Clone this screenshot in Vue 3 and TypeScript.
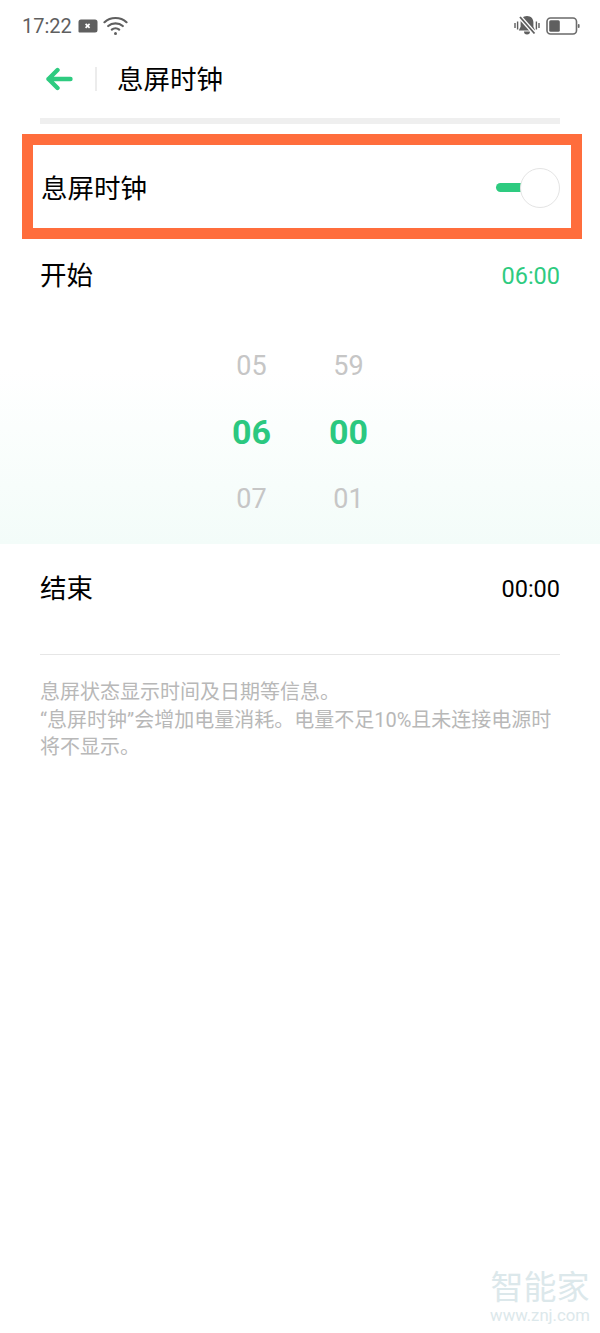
<template>
  <div class="page">
    <div class="status-bar">
      <div class="status-left">
        <span class="clock">17:22</span>
        <svg class="sim" width="20" height="14" viewBox="0 0 20 14">
          <path d="M3 0.5H17a2.5 2.5 0 0 1 2.5 2.5V11a2.5 2.5 0 0 1-2.5 2.5H1.5a1 1 0 0 1-1-1V3A2.5 2.5 0 0 1 3 0.5Z" fill="#5f5f5f" />
          <path d="M7.6 4.8l4 4M11.6 4.8l-4 4" stroke="#fff" stroke-width="1.7" />
        </svg>
        <svg class="wifi" width="25" height="20" viewBox="0 0 25 20" fill="none" stroke="#5f5f5f" stroke-width="2.2" stroke-linecap="round">
          <path d="M1.5 6.2C7.5 0.6 17.5 0.6 23.5 6.2" />
          <path d="M5.2 10C9.2 6.4 15.8 6.4 19.8 10" />
          <path d="M8.8 13.6C10.9 11.9 14.1 11.9 16.2 13.6" />
          <circle cx="12.5" cy="17.6" r="1.5" fill="#5f5f5f" stroke="none" />
        </svg>
      </div>
      <div class="status-right">
        <svg width="26" height="22" viewBox="0 0 26 22">
          <path d="M13 1c4 0 6.4 2.8 6.4 6.4v4.4l1.8 3.7H4.8l1.8-3.7V7.4C6.6 3.8 9 1 13 1Z" fill="#5f5f5f" />
          <path d="M10 16.5h6a3 3 0 0 1-6 0Z" fill="#5f5f5f" />
          <path d="M5.5 1.5L21 19" stroke="#fff" stroke-width="4.2" />
          <path d="M6 2L20.5 18.5" stroke="#5f5f5f" stroke-width="1.8" />
          <path d="M1 8v5M3.6 6.5v8M22.4 6.5v8M25 8v5" stroke="#5f5f5f" stroke-width="1.4" />
        </svg>
        <svg width="34" height="18" viewBox="0 0 34 18">
          <rect x="1" y="1" width="29.5" height="16" rx="3.5" fill="none" stroke="#6a6a6a" stroke-width="1.6" />
          <rect x="3.2" y="3.2" width="10.6" height="11.6" rx="1.5" fill="#5f5f5f" />
          <rect x="31.8" y="7" width="1.8" height="4" rx="0.9" fill="#6a6a6a" />
        </svg>
      </div>
    </div>

    <header class="title-bar">
      <svg class="back" width="28" height="24" viewBox="0 0 28 24" fill="none" stroke="#2ecb80" stroke-width="4.4" stroke-linecap="round" stroke-linejoin="round">
        <path d="M25.5 12H3.5M12.5 3L3.5 12L12.5 21" />
      </svg>
      <span class="title-sep"></span>
      <h1 class="title">息屏时钟</h1>
    </header>

    <div class="thick-rule"></div>

    <div class="highlight">
      <div class="row switch-row">
        <span class="label">息屏时钟</span>
        <div class="switch">
          <span class="switch-track"></span>
          <span class="switch-knob"></span>
        </div>
      </div>
    </div>

    <div class="row start-row">
      <span class="label">开始</span>
      <span class="time active">06:00</span>
    </div>

    <div class="picker">
      <div v-for="col in columns" :key="col.current" class="picker-col">
        <span class="side">{{ col.prev }}</span>
        <span class="current">{{ col.current }}</span>
        <span class="side">{{ col.next }}</span>
      </div>
    </div>

    <div class="row end-row">
      <span class="label">结束</span>
      <span class="time">00:00</span>
    </div>

    <div class="rule"></div>

    <p class="note">
      息屏状态显示时间及日期等信息。<br />
      “息屏时钟”会增加电量消耗。电量不足10%且未连接电源时将不显示。
    </p>

    <div class="watermark">
      <div class="wm-name">智能家</div>
      <div class="wm-url">www.znj.com</div>
    </div>
  </div>
</template>

<script setup lang="ts">
const columns = [
  { prev: '05', current: '06', next: '07' },
  { prev: '59', current: '00', next: '01' },
];
</script>

<style>
html,
body {
  margin: 0;
  background: #fff;
}
</style>

<style scoped>
.page {
  position: relative;
  width: 600px;
  height: 1333px;
  overflow: hidden;
  background: #fff;
  color: #000;
  font-family: Roboto, "Noto Sans CJK SC", sans-serif;
}

.status-bar {
  height: 52px;
  padding: 0 20px 0 22px;
  box-sizing: border-box;
  display: flex;
  justify-content: space-between;
  align-items: center;
}

.status-left,
.status-right {
  display: flex;
  align-items: center;
}

.clock {
  font-size: 20px;
  color: #5f5f5f;
}

.sim {
  margin-left: 6px;
}

.wifi {
  margin-left: 5px;
}

.status-right {
  gap: 6px;
}

.title-bar {
  height: 54px;
  padding-left: 45px;
  display: flex;
  align-items: center;
}

.title-sep {
  width: 2px;
  height: 24px;
  margin-left: 22px;
  background: #ececec;
}

.title {
  margin: 2px 0 0 20px;
  font-size: 26.5px;
  font-weight: 400;
  line-height: 36px;
}

.thick-rule {
  height: 6px;
  margin: 12px 40px 0;
  background: #efefef;
}

.highlight {
  height: 105px;
  margin: 10px 18px 0 22px;
  box-sizing: border-box;
  border: 11px solid #ff6d3c;
  background: #fff;
}

.row {
  display: flex;
  justify-content: space-between;
  align-items: center;
  padding: 0 40px;
}

.switch-row {
  height: 83px;
  padding: 0 11px 0 8px;
}

.label {
  padding-top: 2px;
  font-size: 26.5px;
  line-height: 36px;
}

.switch-row .label {
  padding-top: 4px;
}

.switch {
  position: relative;
  width: 64px;
  height: 40px;
  margin-top: 3px;
}

.switch-track {
  position: absolute;
  left: 0;
  top: 15px;
  width: 34px;
  height: 9px;
  border-radius: 5px 0 0 5px;
  background: #2ecb80;
}

.switch-knob {
  position: absolute;
  right: 0;
  top: 0;
  width: 40px;
  height: 40px;
  box-sizing: border-box;
  border: 1px solid #e4e4e4;
  border-radius: 50%;
  background: #fff;
}

.start-row {
  height: 72px;
}

.time {
  padding-top: 1px;
  font-size: 23.5px;
}

.time.active {
  color: #2ecb80;
}

.picker {
  height: 233px;
  padding-top: 22px;
  box-sizing: border-box;
  display: flex;
  justify-content: center;
  gap: 41px;
  background: linear-gradient(#fff 25%, #f3fcf9 100%);
}

.picker-col {
  width: 56px;
  display: flex;
  flex-direction: column;
  align-items: center;
}

.side {
  height: 66px;
  line-height: 66px;
  font-size: 27px;
  color: #c6c6c6;
}

.current {
  height: 67px;
  line-height: 67px;
  font-size: 34px;
  font-weight: 700;
  color: #2bc880;
}

.end-row {
  height: 88px;
}

.rule {
  height: 1px;
  margin: 22px 40px 0;
  background: #e6e6e6;
}

.note {
  margin: 24px 40px 0;
  font-size: 20px;
  line-height: 27.5px;
  color: #b8b8b8;
}

.watermark {
  position: absolute;
  left: 489px;
  top: 1270px;
  width: 102px;
  text-align: center;
  color: #dce8eb;
}

.wm-name {
  font-size: 33px;
  line-height: 36px;
}

.wm-url {
  font-size: 16.7px;
  line-height: 20px;
}
</style>
